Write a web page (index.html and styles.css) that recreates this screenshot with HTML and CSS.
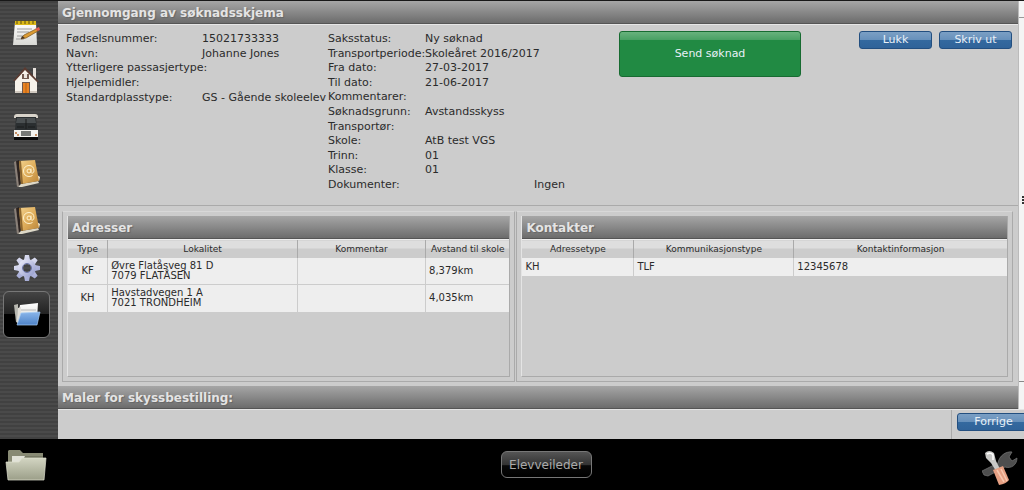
FILE: index.html
```html
<!DOCTYPE html>
<html lang="no">
<head>
<meta charset="utf-8">
<title>Gjennomgang av søknadsskjema</title>
<link rel="stylesheet" href="styles.css">
</head>
<body>
<svg class="defs" aria-hidden="true">
  <defs>
    <linearGradient id="gold" x1="0" y1="0" x2="1" y2="1"><stop offset="0" stop-color="#f3d28e"/><stop offset=".5" stop-color="#dfae5c"/><stop offset="1" stop-color="#b98438"/></linearGradient>
    <linearGradient id="blue" x1="0" y1="0" x2="0" y2="1"><stop offset="0" stop-color="#8ab6ea"/><stop offset="1" stop-color="#4e83c8"/></linearGradient>
    <linearGradient id="khaki" x1="0" y1="0" x2="0" y2="1"><stop offset="0" stop-color="#d3d5c2"/><stop offset="1" stop-color="#9c9f89"/></linearGradient>
    <linearGradient id="paper" x1="0" y1="0" x2="0" y2="1"><stop offset="0" stop-color="#ffffff"/><stop offset="1" stop-color="#d9d9d5"/></linearGradient>
    <linearGradient id="steel" x1="0" y1="0" x2="1" y2="1"><stop offset="0" stop-color="#f0f0fb"/><stop offset="1" stop-color="#8f97cb"/></linearGradient>
    <symbol id="book" viewBox="0 0 28 30">
      <path d="M2 3 6 1 9 22 5 28Z" fill="#2c2320"/>
      <path d="M1 3 3 2 6 27 4 28Z" fill="#8a8078"/>
      <path d="M5 28 8 25 25 22 26 24 9 28Z" fill="#ddd8c8"/>
      <path d="M24 16 27 18 26 22 24 21Z" fill="#f5edd8"/>
      <path d="M6 2 22 1 26 22 8 25Z" fill="url(#gold)"/>
      <path d="M6 2 8 2 10 25 8 25Z" fill="#8d672f"/>
      <g fill="none" stroke="#fff3cf" stroke-width="1"><circle cx="16" cy="12" r="2"/><path d="M18 9.500v3.500c0 2 3 1.500 3-1.500 0-3-2-5-5-5s-5.500 2-5.500 5.500 2.500 5.500 5.500 5.500c1.500 0 2.500-.5 3.500-1"/></g>
    </symbol>
  </defs>
</svg>
<div class="app">
  <nav class="side" aria-label="Meny">
    <button class="side-btn" aria-label="Søknad"><svg width="28" height="28" viewBox="0 0 28 28"><path d="M2 3H23L24 26H0Z" fill="url(#paper)"/><path d="M2 2H23V6H2Z" fill="#dcb918"/><path d="M4 1V5M8 1V5M12 1V5M16 1V5M20 1V5" stroke="#5a4c12" stroke-width="1"/><path d="M4 10H19M4 13H16M4 17H14M3 20H11" stroke="#9b9b9b"/><path d="M8 20 11 16 23 10 25 12 13 19Z" fill="#dd9c34" stroke="#75501c" stroke-width=".7"/><path d="M22 10 26 8 27 11 25 12Z" fill="#e35b50"/><path d="M8 20 9 17 12 19Z" fill="#443322"/></svg></button>
    <button class="side-btn" aria-label="Hjem"><svg width="28" height="28" viewBox="0 0 28 28"><path d="M20 2H23V14H20Z" fill="#e7e2dc"/><path d="M2 14 12 3 24 15V27H2Z" fill="#f7f2ea"/><path d="M0 15 12 1 26 16 24 16 12 4 2 15Z" fill="#5b3b31"/><path d="M9 8H16V13H9Z" fill="#735b50"/><path d="M11 8H14V12H11Z" fill="#ece5dd"/><path d="M9 16H17V27H9Z" fill="#70584a"/><path d="M10 17H16V27H10Z" fill="#e98322"/><path d="M13 17V27" stroke="#9c4e0c" stroke-width=".6"/><path d="M2 26H9M17 26H24" stroke="#aaa095"/></svg></button>
    <button class="side-btn" aria-label="Buss"><svg width="28" height="28" viewBox="0 0 28 28"><path d="M1 4Q1 1 4 1H22Q25 1 25 4V5H1Z" fill="#d8d3ca"/><path d="M3 4H23L24 17H2Z" fill="#2b2f31"/><path d="M4 5H22L23 10H3Z" fill="#4a4f51"/><path d="M13 6V16M4 14H11M15 14H22" stroke="#1b1c1c"/><path d="M1 17H25V24H1Z" fill="#f3f2ee"/><path d="M8 18H18V23H8Z" fill="#777976"/><path d="M2 19H4V21H2ZM4 21H6V23H4ZM22 21H24V23H22Z" fill="#c79167"/><path d="M1 24H25V27H1Z" fill="#080808"/></svg></button>
    <button class="side-btn" aria-label="Adressebok"><svg width="28" height="30"><use href="#book"/></svg></button>
    <button class="side-btn" aria-label="Kontakter"><svg width="28" height="30"><use href="#book"/></svg></button>
    <button class="side-btn" aria-label="Innstillinger"><svg width="28" height="28" viewBox="-14 -14 28 28"><g fill="url(#steel)"><g id="teeth"><path d="M-3-8-2-13H2L3-8ZM-3 8-2 13H2L3 8ZM-8-3-13-2V2L-8 3ZM8-3 13-2V2L8 3Z"/></g><use href="#teeth" transform="rotate(45)"/><path fill-rule="evenodd" d="M-9 0A9 9 0 1 0 9 0 9 9 0 1 0-9 0ZM-4 0A4 4 0 1 1 4 0 4 4 0 1 1-4 0Z"/></g><circle r="4.500" fill="none" stroke="#6972a5"/></svg></button>
    <button class="side-btn side-btn-active" aria-label="Mapper"><svg width="28" height="26" viewBox="0 0 28 26"><path d="M1 3 5 2V21L3 20Z" fill="#b8b8b1"/><path d="M7 3 25 1 24 18H4Z" fill="url(#paper)"/><path d="M5 6 8 5 7 19 4 21Z" fill="#dedcd5"/><path d="M8 8H23" stroke="#b6b6b4"/><path d="M8 11 27 10 24 23H4Z" fill="url(#blue)" stroke="#a8cdf5" stroke-width=".7"/></svg></button>
  </nav>
  <main class="main">
    <div class="upper">
      <div class="content">
        <h1 class="bar">Gjennomgang av søknadsskjema</h1>
        <section class="details">
          <dl class="facts facts-person">
            <dt>Fødselsnummer:</dt><dd>15021733333</dd>
            <dt>Navn:</dt><dd>Johanne Jones</dd>
            <dt>Ytterligere passasjertype:</dt><dd></dd>
            <dt>Hjelpemidler:</dt><dd></dd>
            <dt>Standardplasstype:</dt><dd>GS - Gående skoleelev</dd>
          </dl>
          <dl class="facts facts-case">
            <dt>Saksstatus:</dt><dd>Ny søknad</dd>
            <dt>Transportperiode:</dt><dd>Skoleåret 2016/2017</dd>
            <dt>Fra dato:</dt><dd>27-03-2017</dd>
            <dt>Til dato:</dt><dd>21-06-2017</dd>
            <dt>Kommentarer:</dt><dd></dd>
            <dt>Søknadsgrunn:</dt><dd>Avstandsskyss</dd>
            <dt>Transportør:</dt><dd></dd>
            <dt>Skole:</dt><dd>AtB test VGS</dd>
            <dt>Trinn:</dt><dd>01</dd>
            <dt>Klasse:</dt><dd>01</dd>
            <dt>Dokumenter:</dt><dd class="documents">Ingen</dd>
          </dl>
          <button class="btn btn-send">Send søknad</button>
          <div class="actions">
            <button class="btn">Lukk</button>
            <button class="btn">Skriv ut</button>
          </div>
        </section>
        <div class="panes">
          <section class="pane pane-addresses">
            <div class="panel">
              <h2 class="bar">Adresser</h2>
              <table class="grid">
                <colgroup><col class="c-type"><col class="c-place"><col class="c-comment"><col class="c-dist"></colgroup>
                <thead><tr><th>Type</th><th>Lokalitet</th><th>Kommentar</th><th>Avstand til skole</th></tr></thead>
                <tbody>
                  <tr><td class="center">KF</td><td>Øvre Flatåsveg 81 D<br>7079 FLATÅSEN</td><td></td><td>8,379km</td></tr>
                  <tr><td class="center">KH</td><td>Havstadvegen 1 A<br>7021 TRONDHEIM</td><td></td><td>4,035km</td></tr>
                </tbody>
              </table>
            </div>
          </section>
          <section class="pane pane-contacts">
            <div class="panel">
              <h2 class="bar">Kontakter</h2>
              <table class="grid grid-short">
                <colgroup><col class="c-kind"><col class="c-channel"><col class="c-info"></colgroup>
                <thead><tr><th>Adressetype</th><th>Kommunikasjonstype</th><th>Kontaktinformasjon</th></tr></thead>
                <tbody><tr><td>KH</td><td>TLF</td><td>12345678</td></tr></tbody>
              </table>
            </div>
          </section>
        </div>
        <h2 class="bar">Maler for skyssbestilling:</h2>
      </div>
      <div class="splitter"><div class="splitter-cap"></div><div class="splitter-body"><span class="grip"></span></div><div class="splitter-end"></div></div>
    </div>
    <div class="pager"><div class="pager-box"><button class="btn btn-prev">Forrige</button></div></div>
  </main>
</div>
<footer class="dock">
  <button class="dock-icon" aria-label="Arkiv"><svg width="42" height="34" viewBox="0 0 42 34"><path d="M3 3 4 2H15L18 5H38V15H3Z" fill="#888a74"/><path d="M7 8H36V16H7Z" fill="#e1e2d8"/><path d="M20 8H38V12H18Z" fill="#747762"/><path d="M1 14H14L17 10H41L39 32H3Z" fill="url(#khaki)" stroke="#e0e1d0" stroke-width=".7"/></svg></button>
  <button class="dock-label">Elevveileder</button>
  <button class="dock-icon" aria-label="Verktøy"><svg width="36" height="40" viewBox="0 -4 36 40"><path d="M0 22 16 14C17 7 24 2 30 3L27 8 30 12 35 9C35 16 29 20 23 18L6 27 2 26Z" fill="#4e4e4e" stroke="#777" stroke-width=".7"/><path d="M3 4Q7 0 12 4L14 12 18 20 14 22 9 14 4 9Z" fill="#c9c9c7"/><path d="M5 5Q9 3 11 6L11 11" stroke="#fff" stroke-width="1.500" fill="none"/><path d="M11 21 21 17 27 31Q24 35 17 36Z" fill="#e7a083"/><path d="M15 21 22 33M19 20 25 32" stroke="#f8c7ae" stroke-width="1.500"/></svg></button>
</footer>
</body>
</html>
```
FILE: styles.css
```css
* { box-sizing: border-box; }
body {
  margin: 0;
  min-height: 100vh;
  display: flex;
  flex-direction: column;
  background: #000;
  color: #2b2b2b;
  font: 11px/14px "DejaVu Sans", Verdana, sans-serif;
  overflow-x: hidden;
}
button { font: inherit; margin: 0; padding: 0; border: 0; background: none; cursor: pointer; }
.defs { position: absolute; width: 0; height: 0; }

.app { flex: 1; display: flex; border-top: 1px solid #181818; }

/* Left icon rail */
.side {
  flex: none;
  width: 58px;
  padding: 8px 3px 0;
  background: repeating-linear-gradient(#414141 0 2px, #4a4a4a 2px 4px);
}
.side-btn { display: flex; width: 47px; height: 47px; align-items: center; justify-content: center; }
.side-btn-active {
  border: 1px solid #777;
  border-radius: 6px;
  background: linear-gradient(#444, #222 49%, #000 50%);
}

.main { flex: 1; min-width: 0; display: flex; flex-direction: column; background: #ccc; }
.upper { flex: 1; display: flex; }
.content { flex: 1; min-width: 0; display: flex; flex-direction: column; }

.bar {
  margin: 0;
  padding: 1px 4px 0;
  height: 23px;
  border-bottom: 1px solid #555;
  background: linear-gradient(#a6a6a6, #6c6c6c);
  color: #e4e4e4;
  font-size: 12px;
  font-weight: bold;
  line-height: 22px;
  text-shadow: 1px 1px 1px #666;
}

/* Application details */
.details {
  display: flex;
  align-items: flex-start;
  min-height: 182px;
  padding: 6px 6px 0 8px;
  border-top: 1px solid #e6e6e6;
  border-bottom: 1px solid #aaa;
}
.facts { display: grid; grid-auto-rows: 1fr; align-items: center; margin: 1px 0 0; white-space: nowrap; }
.facts dd { margin: 0; }
.facts-person { grid-template-columns: 136px 126px; min-height: 73px; }
.facts-case { grid-template-columns: 97px 194px; min-height: 160px; }
.facts .documents { padding-left: 109px; }

.btn {
  width: 73px;
  height: 18px;
  border: 1px solid #234f80;
  border-radius: 3px;
  background: linear-gradient(#7b9fc4, #6690bb 8px, #34699f 8px, #306399);
  color: #e8f0f8;
}
.btn-send {
  width: 182px;
  height: 46px;
  border-color: #176b31;
  background: linear-gradient(#68b27d, #48a063 8px, #218a43 8px);
}
.actions { display: flex; gap: 7px; margin-left: auto; }

/* Address and contact tables */
.panes { flex: 1; display: flex; gap: 1px; margin: 5px 5px 4px 4px; }
.pane {
  display: flex;
  padding: 4px;
  border: 1px solid #aaa;
  border-top-color: #d8d8d8;
}
.pane-addresses { flex: 453; }
.pane-contacts { flex: 497; }
.panel { flex: 1; border: 1px solid #aaa; border-top: 0; border-left-color: #e4e4e4; }
.grid { width: 100%; table-layout: fixed; border-collapse: collapse; font-size: 10px; line-height: 10px; }
.grid th {
  height: 18px;
  padding: 0;
  border-left: 1px solid #aaa;
  border-top: 1px solid #eee;
  background: linear-gradient(#dedede 50%, #ccc 50%);
  font-size: 9px;
  font-weight: normal;
  text-align: center;
}
.grid td {
  height: 27px;
  padding: 0 3px;
  border-left: 1px solid #ccc;
  border-top: 1px solid #ccc;
  background: #eee;
}
.grid-short td { height: 18px; }
.grid th:first-child, .grid td:first-child { border-left: 0; }
.grid .center { text-align: center; }
.c-type { width: 9%; }
.c-place { width: 43%; }
.c-comment { width: 29%; }
.c-dist { width: 19%; }
.c-kind { width: 23%; }
.c-channel { width: 33%; }
.c-info { width: 44%; }

/* Collapsed side pane on the right edge */
.splitter { flex: none; width: 6px; display: flex; flex-direction: column; border-left: 1px solid #bbb; background: #f4f4f4; }
.splitter-cap { height: 17px; border-bottom: 1px solid #999; }
.splitter-body { flex: 1; display: flex; align-items: center; justify-content: flex-end; border-bottom: 1px solid #888; }
.grip { width: 2px; height: 8px; background: repeating-linear-gradient(#333 0 2px, #f4f4f4 2px 3px); }
.splitter-end { height: 27px; }

.pager { display: flex; justify-content: flex-end; height: 30px; border-top: 1px solid #e4e4e4; }
.pager-box { width: 73px; padding: 3px 0 0 5px; border-left: 1px solid #aaa; overflow: hidden; }

/* Bottom dock */
.dock { display: flex; align-items: center; justify-content: space-between; height: 51px; padding: 0 3px 0 5px; background: #000; }
.dock-icon { display: flex; width: 42px; justify-content: center; }
.dock-label {
  width: 91px;
  height: 27px;
  margin-left: 66px;
  border: 1px solid #777;
  border-radius: 6px;
  background: linear-gradient(#555, #333 50%, #080808 55%, #000);
  color: #aaa;
  font-size: 12px;
}
```
